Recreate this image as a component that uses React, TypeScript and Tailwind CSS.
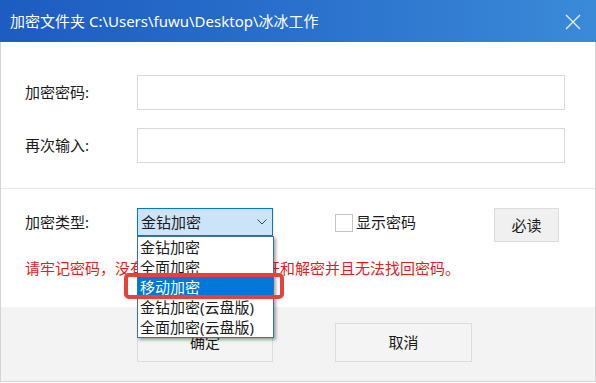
import React from "react";

const font = { fontFamily: "'Noto Sans', 'Noto Sans CJK SC', sans-serif" };

export default function App() {
  return (
    <div
      className="relative w-[596px] h-[383px] bg-white overflow-hidden text-[15px] text-[#1a1a1a]"
      style={font}
    >
      <div className="flex flex-col w-[596px] h-[382px] border-x border-b border-[#d4d4d4]">
        {/* Title bar */}
        <div className="h-[42px] -mx-px flex items-center justify-between pl-[10px] pr-[15px] bg-gradient-to-r from-[#1d5cc0] via-[#2a70cc] to-[#3b8ad8] text-white">
          <span className="text-[15px] leading-none">加密文件夹 C:\Users\fuwu\Desktop\冰冰工作</span>
          <svg width="16" height="16" viewBox="0 0 16 16" className="mt-[2px]">
            <path d="M1 1 L15 15 M15 1 L1 15" stroke="#e8f0fb" strokeWidth="1.3" fill="none" />
          </svg>
        </div>

        {/* Password section */}
        <div className="flex flex-col gap-[18px] pt-[33px] pb-[25px] border-b border-[#e6e6e6]">
          <div className="flex items-center">
            <div className="w-[136px] pl-[24px]">加密密码:</div>
            <div className="w-[428px] h-[35px] border border-[#d9d9d9] bg-white" />
          </div>
          <div className="flex items-center">
            <div className="w-[136px] pl-[24px]">再次输入:</div>
            <div className="w-[428px] h-[35px] border border-[#d9d9d9] bg-white" />
          </div>
        </div>

        {/* Type section */}
        <div className="h-[118px] flex flex-col pt-[19px]">
          <div className="flex items-start h-[34px]">
            <div className="w-[136px] pl-[24px] h-[28px] flex items-center">加密类型:</div>
            <div className="w-[136px] h-[28px] border border-[#0078d7] bg-[#cce4f7] flex items-center justify-between pl-[3px] pr-[5px]">
              <span>金钻加密</span>
              <svg width="10" height="6" viewBox="0 0 10 6">
                <path d="M0.5 0.5 L5 5 L9.5 0.5" stroke="#444" strokeWidth="1" fill="none" />
              </svg>
            </div>
            <div className="w-[62px]" />
            <div className="h-[28px] flex items-center">
              <div className="w-[18px] h-[18px] border border-[#c4c4c4] bg-white mt-[1px]" />
              <span className="ml-[3px]">显示密码</span>
            </div>
            <div className="flex-1" />
            <button className="w-[65px] h-[34px] mr-[36px] border border-[#dcdcdc] bg-[#f0f0f0] text-[15px]">
              必读
            </button>
          </div>
          <div className="mt-[16px] pl-[24px] text-[#e31c1c] leading-[20px] whitespace-nowrap">
            请牢记密码，没有密码则文件无法打开和解密并且无法找回密码。
          </div>
        </div>

        {/* Footer */}
        <div className="flex-1 bg-[#f3f3f3] flex items-start pt-[16px] pl-[136px] gap-[62px]">
          <button className="w-[136px] h-[39px] border border-[#dcdcdc] bg-[#f4f4f4] text-[15px]">确定</button>
          <button className="w-[137px] h-[39px] border border-[#dcdcdc] bg-[#f4f4f4] text-[15px]">取消</button>
        </div>
      </div>

      {/* Dropdown list overlay */}
      <div className="absolute left-[137px] top-[236px] w-[137px] border border-[#3c6fa8] bg-white shadow-[2px_2px_3px_rgba(0,0,0,0.35)] leading-[20px]">
        <div className="h-[20px] pl-[2px]">金钻加密</div>
        <div className="h-[20px] pl-[2px]">全面加密</div>
        <div className="h-[20px] pl-[2px] bg-[#0078d7] text-white">移动加密</div>
        <div className="h-[20px] pl-[2px]">金钻加密(云盘版)</div>
        <div className="h-[20px] pl-[2px]">全面加密(云盘版)</div>
      </div>

      {/* Red highlight */}
      <div className="absolute left-[124px] top-[273px] w-[160px] h-[26px] border-[4px] border-[#e8413c] rounded-[5px]" />
    </div>
  );
}
